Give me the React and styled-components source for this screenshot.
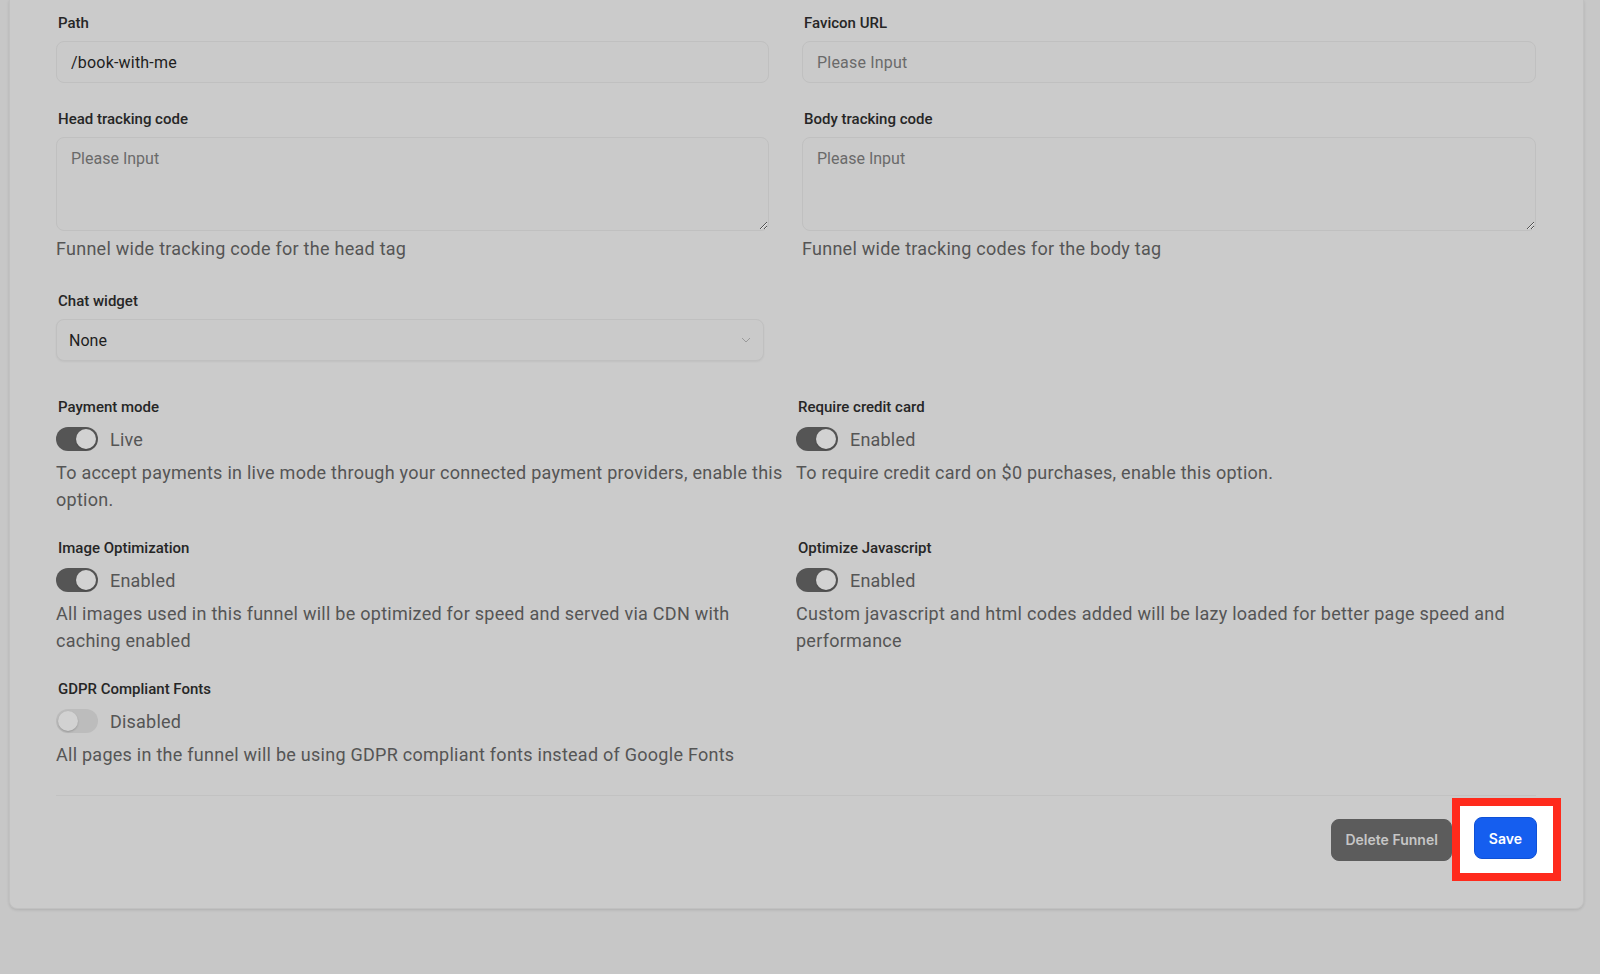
import React from 'react'
import styled, {createGlobalStyle} from 'styled-components'

const GlobalStyle = createGlobalStyle`
    * {
        box-sizing: border-box;
    }
    body {
        margin: 0;
        background: #c7c7c7;
        font-family: Roboto, "Liberation Sans", Arial, sans-serif;
        overflow: hidden;
    }
`;

const Page = styled.div`
    height: 974px;
    padding-left: 9px;
`;

const Card = styled.div`
    width: 1575px;
    background: #cbcbcb;
    border: 1px solid #c1c1c1;
    border-top: none;
    border-radius: 0 0 8px 8px;
    box-shadow: 0 1px 3px rgba(0,0,0,0.12);
    padding: 13px 47px 0 46px;
`;

const TopGrid = styled.div`
    display: grid;
    grid-template-columns: 1fr 1fr;
    column-gap: 12px;
`;

const Item = styled.div`
    padding-bottom: ${p => p.pb || 26}px;
    padding-right: ${p => p.pr || 0}px;
`;

const Label = styled.div`
    font-size: 15px;
    line-height: 20px;
    font-weight: 500;
    color: #262626;
    padding-left: 2px;
    margin-bottom: ${p => p.mb || 8}px;
`;

const Input = styled.input`
    display: block;
    width: 100%;
    height: 42px;
    background: #cacaca;
    border: 1px solid #c0c0c0;
    border-radius: 8px;
    padding: 0 14px;
    font-family: Roboto, "Liberation Sans", Arial, sans-serif;
    font-size: 16px;
    letter-spacing: 0.2px;
    color: #1e1e1e;
    outline: none;

    &::placeholder {
        color: #6a6a6a;
    }
`;

const TextArea = styled.textarea`
    display: block;
    width: 100%;
    height: 94px;
    background: #cacaca;
    border: 1px solid #c0c0c0;
    border-radius: 8px;
    padding: 9px 14px;
    font-family: Roboto, "Liberation Sans", Arial, sans-serif;
    font-size: 16px;
    line-height: 24px;
    color: #1e1e1e;
    outline: none;
    resize: vertical;

    &::placeholder {
        color: #6a6a6a;
    }
`;

const Help = styled.div`
    font-size: 18px;
    line-height: 27px;
    letter-spacing: 0.26px;
    color: #555;
    margin-top: ${p => p.mt || 4}px;
    margin-bottom: ${p => p.mb || 0}px;
`;

const SelectBox = styled.div`
    width: calc(100% - 26px);
    height: 42px;
    display: flex;
    align-items: center;
    justify-content: space-between;
    background: #cacaca;
    border: 1px solid #c0c0c0;
    border-radius: 8px;
    padding: 0 12px 0 12px;
    font-size: 16px;
    color: #1e1e1e;
    box-shadow: 0 1px 2px rgba(0,0,0,0.05);
`;

const ToggleGrid = styled.div`
    display: grid;
    grid-template-columns: 1fr 1fr;
    margin-top: 10px;
`;

const ToggleRow = styled.div`
    display: flex;
    align-items: center;
    gap: 12px;
    height: 24px;
    font-size: 18px;
    letter-spacing: 0.2px;
    color: #555;
`;

const Track = styled.span`
    position: relative;
    width: 42px;
    height: 24px;
    border-radius: 12px;
    background: ${p => p.on ? '#555555' : '#bcbcbc'};
    flex-shrink: 0;

    &::after {
        content: '';
        position: absolute;
        top: 2px;
        left: ${p => p.on ? '20px' : '2px'};
        width: 20px;
        height: 20px;
        border-radius: 50%;
        background: #d2d2d2;
        box-shadow: 0 1px 2px rgba(0,0,0,0.2);
    }
`;

const Footer = styled.div`
    margin-top: 2px;
    border-top: 1px solid #c2c2c2;
    padding: 2px 0 27px;
    display: flex;
    justify-content: flex-end;
    align-items: center;
`;

const Button = styled.button`
    height: 42px;
    padding: 0 ${p => p.px || 13}px;
    border-radius: 8px;
    font-family: Inter, Roboto, "Liberation Sans", Arial, sans-serif;
    font-size: 14px;
    font-weight: 600;
    cursor: pointer;
    border: 1px solid ${p => p.primary ? '#0f51d6' : '#5c5c5c'};
    background: ${p => p.primary ? '#155eef' : '#5c5c5c'};
    color: ${p => p.primary ? '#ffffff' : '#c6c6c6'};
`;

const Highlight = styled.div`
    border: 8px solid #ff2a1c;
    background: #ffffff;
    padding: 11px 16px 14px 14px;
    margin-right: -25px;
    display: flex;
`;

const Chevron = () => (
    <svg width="10" height="6" viewBox="0 0 10 6" fill="none">
        <path d="M1 1l4 4 4-4" stroke="#9a9a9a" strokeWidth="1" />
    </svg>
)

const ToggleItem = ({label, on, text, help}) => (
    <Item pb={25}>
        <Label mb={10}>{label}</Label>
        <ToggleRow>
            <Track on={on ? 1 : 0} />
            <span>{text}</span>
        </ToggleRow>
        <Help mt={8}>{help}</Help>
    </Item>
)

const App = () => {
    return (
        <Page>
            <GlobalStyle />
            <Card>
                <TopGrid>
                    <Item pr={21}>
                        <Label>Path</Label>
                        <Input readOnly defaultValue="/book-with-me" />
                    </Item>
                    <Item>
                        <Label>Favicon URL</Label>
                        <Input readOnly placeholder="Please Input" />
                    </Item>
                    <Item pr={21}>
                        <Label>Head tracking code</Label>
                        <TextArea readOnly placeholder="Please Input" />
                        <Help mb={3}>Funnel wide tracking code for the head tag</Help>
                    </Item>
                    <Item>
                        <Label>Body tracking code</Label>
                        <TextArea readOnly placeholder="Please Input" />
                        <Help mb={3}>Funnel wide tracking codes for the body tag</Help>
                    </Item>
                    <Item>
                        <Label>Chat widget</Label>
                        <SelectBox>
                            <span>None</span>
                            <Chevron />
                        </SelectBox>
                    </Item>
                </TopGrid>

                <ToggleGrid>
                    <ToggleItem
                        label="Payment mode"
                        on
                        text="Live"
                        help="To accept payments in live mode through your connected payment providers, enable this option."
                    />
                    <ToggleItem
                        label="Require credit card"
                        on
                        text="Enabled"
                        help="To require credit card on $0 purchases, enable this option."
                    />
                    <ToggleItem
                        label="Image Optimization"
                        on
                        text="Enabled"
                        help="All images used in this funnel will be optimized for speed and served via CDN with caching enabled"
                    />
                    <ToggleItem
                        label="Optimize Javascript"
                        on
                        text="Enabled"
                        help="Custom javascript and html codes added will be lazy loaded for better page speed and performance"
                    />
                    <ToggleItem
                        label="GDPR Compliant Fonts"
                        text="Disabled"
                        help="All pages in the funnel will be using GDPR compliant fonts instead of Google Fonts"
                    />
                </ToggleGrid>

                <Footer>
                    <Button>Delete Funnel</Button>
                    <Highlight>
                        <Button primary px={14}>Save</Button>
                    </Highlight>
                </Footer>
            </Card>
        </Page>
    )
}

export default App
